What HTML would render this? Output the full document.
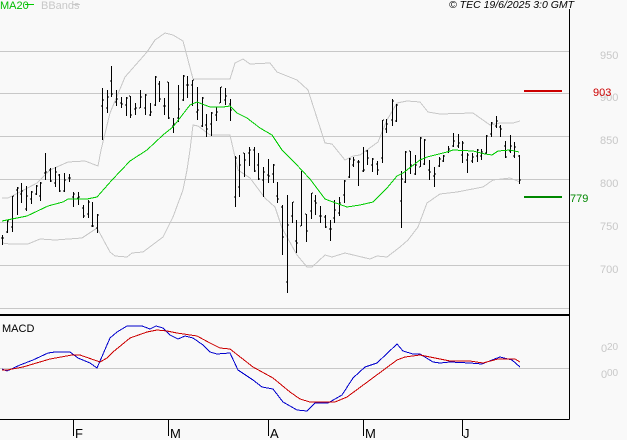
<!DOCTYPE html>
<html><head><meta charset="utf-8"><style>
html,body{margin:0;padding:0;background:#f9f9f9}
svg{display:block;font-family:"Liberation Sans",sans-serif}
text{font-size:11px}
</style></head><body>
<svg width="627" height="440" viewBox="0 0 627 440" xmlns="http://www.w3.org/2000/svg">
<rect width="627" height="440" fill="#f9f9f9"/>
<path shape-rendering="crispEdges" stroke="#c8c8c8" stroke-width="1" fill="none" d="M0 51.5H569M0 93.5H569M0 136.5H569M0 179.5H569M0 222.5H569M0 265.5H569M0 308.5H569M0 368.5H569"/>
<g fill="none" stroke-width="1" shape-rendering="crispEdges">
<polyline stroke="#c8c8c8" points="2,198 8,198 20,192 37,183 50,170 68,162 85,161 98,166 101,150 110,113 125,77 147,52 155,40 165,33 173,35 183,41 188,60 193,79 210,79 230,79 235,63 243,59 250,64 270,63 277,72 297,80 308,90 325,143 332,144 345,160 353,156 360,155 378,142 387,120 397,103 407,101 420,102 428,112 440,114 473,113 490,125 500,123 513,123 520,121"/>
<polyline stroke="#c8c8c8" points="2,243 10,244 28,244 40,239 55,240 82,238 97,228 110,252 115,256 127,257 132,253 143,252 163,237 173,217 183,190 187,170 190,150 193,125 198,126 210,135 230,135 235,157 238,170 250,178 265,198 275,207 282,228 297,255 307,267 312,267 325,255 332,257 345,253 370,259 377,256 387,257 400,247 408,240 418,227 427,203 440,194 457,192 483,187 493,180 510,178 520,182"/>
</g>
<path shape-rendering="crispEdges" fill="none" stroke="#000" stroke-width="1" d="M2.5 235V245M1 238h1M3 238h1M7.500 220V233M6 232h1M8 221h1M12.500 196V232M11 227h1M13 196h1M17.500 187V215M16 190h1M18 188h1M21.500 183V203M20 194h1M22 191h1M26.500 186V211M25 209h1M27 196h1M31.500 191V204M30 199h1M32 192h1M36.500 185V195M35 194h1M37 186h1M40.500 182V201M39 196h1M41 183h1M45.500 153V180M44 173h1M46 172h1M50.500 168V182M49 170h1M51 181h1M55.500 167V187M54 183h1M56 172h1M59.500 174V192M58 175h1M60 191h1M64.500 173V192M63 191h1M65 180h1M69.500 174V182M68 178h1M70 178h1M73.500 192V207M72 197h1M74 194h1M78.500 192V205M77 198h1M79 197h1M83.500 205V218M82 208h1M84 216h1M88.500 200V218M87 214h1M89 202h1M92.500 202V227M91 226h1M93 226h1M97.500 214V233M96 228h1M98 215h1M102.500 88V140M101 106h1M103 100h1M107.500 90V113M106 108h1M108 97h1M111.500 66V97M110 81h1M112 94h1M116.500 90V106M115 102h1M117 99h1M121.500 97V108M120 103h1M122 104h1M126.500 97V116M125 105h1M127 98h1M130.500 96V118M129 96h1M131 115h1M135.500 103V115M134 109h1M136 108h1M140.500 90V108M139 108h1M141 97h1M145.500 94V115M144 108h1M146 95h1M150.500 103V116M149 115h1M151 112h1M155.500 76V106M154 105h1M156 77h1M159.500 81V102M158 84h1M160 99h1M164.500 98V115M163 106h1M165 106h1M168.500 82V119M167 82h1M169 118h1M173.500 118V133M172 126h1M174 124h1M178.500 85V122M177 118h1M179 109h1M183.500 75V101M182 100h1M184 76h1M187.500 76V98M186 85h1M188 85h1M192.500 80V106M191 85h1M193 80h1M197.500 87V120M196 112h1M198 110h1M202.500 97V127M201 126h1M203 98h1M206.500 114V137M205 125h1M207 129h1M211.500 112V136M210 124h1M212 113h1M216.500 107V121M215 115h1M217 112h1M220.500 87V103M219 103h1M221 87h1M225.500 88V105M224 100h1M226 96h1M230.500 99V121M229 104h1M231 110h1M235.500 156V207M234 197h1M236 158h1M239.500 155V197M238 187h1M240 165h1M244.500 153V177M243 153h1M245 160h1M249.500 147V166M248 153h1M250 150h1M254.500 147V172M253 150h1M255 171h1M258.500 153V180M257 165h1M259 179h1M263.500 167V197M262 180h1M264 172h1M268.500 159V183M267 175h1M269 176h1M273.500 164V183M272 174h1M274 165h1M277.500 182V203M276 196h1M278 199h1M282.500 205V255M281 207h1M283 237h1M287.500 195V293M286 282h1M288 225h1M292.500 202V223M291 216h1M293 202h1M296.500 220V253M295 241h1M297 243h1M301.500 171V226M300 226h1M302 171h1M306.500 214V242M305 214h1M307 231h1M311.500 193V219M310 211h1M312 193h1M315.500 195V215M314 201h1M316 203h1M320.500 206V223M319 216h1M321 216h1M325.500 215V228M324 217h1M326 227h1M330.500 220V241M329 229h1M331 229h1M334.500 200V223M333 218h1M335 210h1M339.500 197V216M338 213h1M340 203h1M344.500 180V203M343 195h1M345 181h1M349.500 158V178M348 177h1M350 159h1M353.500 157V167M352 165h1M354 160h1M358.500 160V186M357 162h1M359 162h1M363.500 147V172M362 171h1M364 170h1M367.500 150V165M366 151h1M368 158h1M372.500 158V172M371 165h1M373 159h1M377.500 161V175M376 164h1M378 170h1M382.500 120V163M381 158h1M383 120h1M386.500 119V133M385 129h1M387 124h1M392.500 99V126M391 120h1M393 101h1M396.500 104V122M395 121h1M397 105h1M401.500 171V228M400 201h1M402 179h1M405.500 151V183M404 182h1M406 152h1M410.500 151V174M409 151h1M411 165h1M415.500 155V175M414 174h1M416 165h1M420.500 137V167M419 167h1M421 138h1M424.500 139V165M423 164h1M425 140h1M429.500 160V180M428 170h1M430 172h1M434.500 167V187M433 176h1M435 174h1M439.500 157V167M438 166h1M440 159h1M443.500 155V162M442 161h1M444 156h1M448.500 146V153M447 152h1M449 149h1M453.500 133V147M452 146h1M454 141h1M458.500 134V148M457 146h1M459 143h1M462.500 141V163M461 155h1M463 143h1M467.500 153V173M466 160h1M468 155h1M472.500 153V163M471 161h1M473 157h1M477.500 149V162M476 156h1M478 150h1M481.500 149V160M480 156h1M482 152h1M486.500 135V154M485 153h1M487 136h1M491.500 122V137M490 134h1M492 123h1M496.500 116V128M495 126h1M497 121h1M500.500 125V137M499 127h1M501 129h1M505.500 141V158M504 146h1M506 157h1M510.500 135V153M509 151h1M511 146h1M514.500 142V158M513 156h1M515 147h1M519.500 155V184M518 156h1M520 180h1"/>
<polyline shape-rendering="crispEdges" fill="none" stroke="#00cc00" stroke-width="1" points="2,221 12,219 27,216 48,206 63,202 68,199 87,199 97,197 112,180 130,161 147,150 163,135 173,127 190,105 197,102 210,107 223,107 230,106 237,113 247,118 260,128 272,135 282,150 295,163 310,179 325,199 333,202 347,207 360,205 373,202 387,188 397,176 403,173 420,160 427,157 447,152 453,150 473,151 485,154 492,155 498,151 510,150 519,152"/>
<g shape-rendering="crispEdges" fill="none">
<path stroke="#000" stroke-width="1" d="M569.5 9V419.500M0 419.500H569.500M73.500 419V436M168.500 419V436M268.500 419V436M363.500 419V436M462.500 419V436"/>
<path stroke="#000" stroke-width="2" d="M0 315H569"/>
<path stroke="#cc0000" stroke-width="2" d="M524 91H562"/>
<path stroke="#008800" stroke-width="2" d="M524 197H562"/>
<path stroke="#00cc00" stroke-width="1" d="M25 4.500H34"/>
<path stroke="#c8c8c8" stroke-width="1" d="M72 4.500H80"/>
</g>
<polyline shape-rendering="crispEdges" fill="none" stroke="#0000cc" stroke-width="1" points="2,369 7,371 20,365 33,360 48,353 55,352 70,352 78,358 90,363 97,368 110,338 117,332 127,326 142,326 150,329 156,326 163,328 170,335 178,339 185,336 193,338 203,345 210,352 217,354 230,353 238,370 253,380 262,387 273,389 283,402 297,410 307,411 315,403 328,403 342,395 353,378 365,367 377,363 397,344 403,351 413,354 420,354 433,362 440,363 450,362 470,363 482,364 492,360 500,357 512,360 520,367"/>
<polyline shape-rendering="crispEdges" fill="none" stroke="#cc0000" stroke-width="1" points="2,370 7,370 23,367 50,359 72,355 80,355 100,362 107,358 113,352 130,338 147,332 157,330 167,331 177,333 197,336 210,343 220,348 230,349 253,367 273,378 290,392 300,399 310,402 335,402 347,397 370,380 397,360 405,357 420,355 440,359 450,361 470,361 483,363 498,359 515,359 520,362"/>
<text x="0" y="9" fill="#00bb00">MA20</text>
<text x="41" y="9" fill="#c8c8c8">BBands</text>
<text x="449" y="8" font-style="italic" fill="#000" style="font-size:10.5px">© TEC 19/6/2025 3:0 GMT</text>
<g fill="#c8c8c8">
<text x="600" y="59">950</text>
<text x="600" y="101">900</text>
<text x="600" y="144">850</text>
<text x="600" y="187">800</text>
<text x="600" y="230">750</text>
<text x="600" y="273">700</text>
<text x="601" y="352">0</text>
<text x="607" y="350" style="font-size:10px">20</text>
<text x="601" y="378">0</text>
<text x="607" y="376" style="font-size:10px">00</text>
</g>
<text x="593" y="96" fill="#cc0000">903</text>
<text x="570" y="202" fill="#008800">779</text>
<text x="75" y="438" fill="#000" style="font-size:13px">F</text>
<text x="170" y="438" fill="#000" style="font-size:13px">M</text>
<text x="270" y="438" fill="#000" style="font-size:13px">A</text>
<text x="365" y="438" fill="#000" style="font-size:13px">M</text>
<text x="463" y="438" fill="#000" style="font-size:13px">J</text>
<text x="2" y="332" fill="#000">MACD</text>
</svg>
</body></html>
